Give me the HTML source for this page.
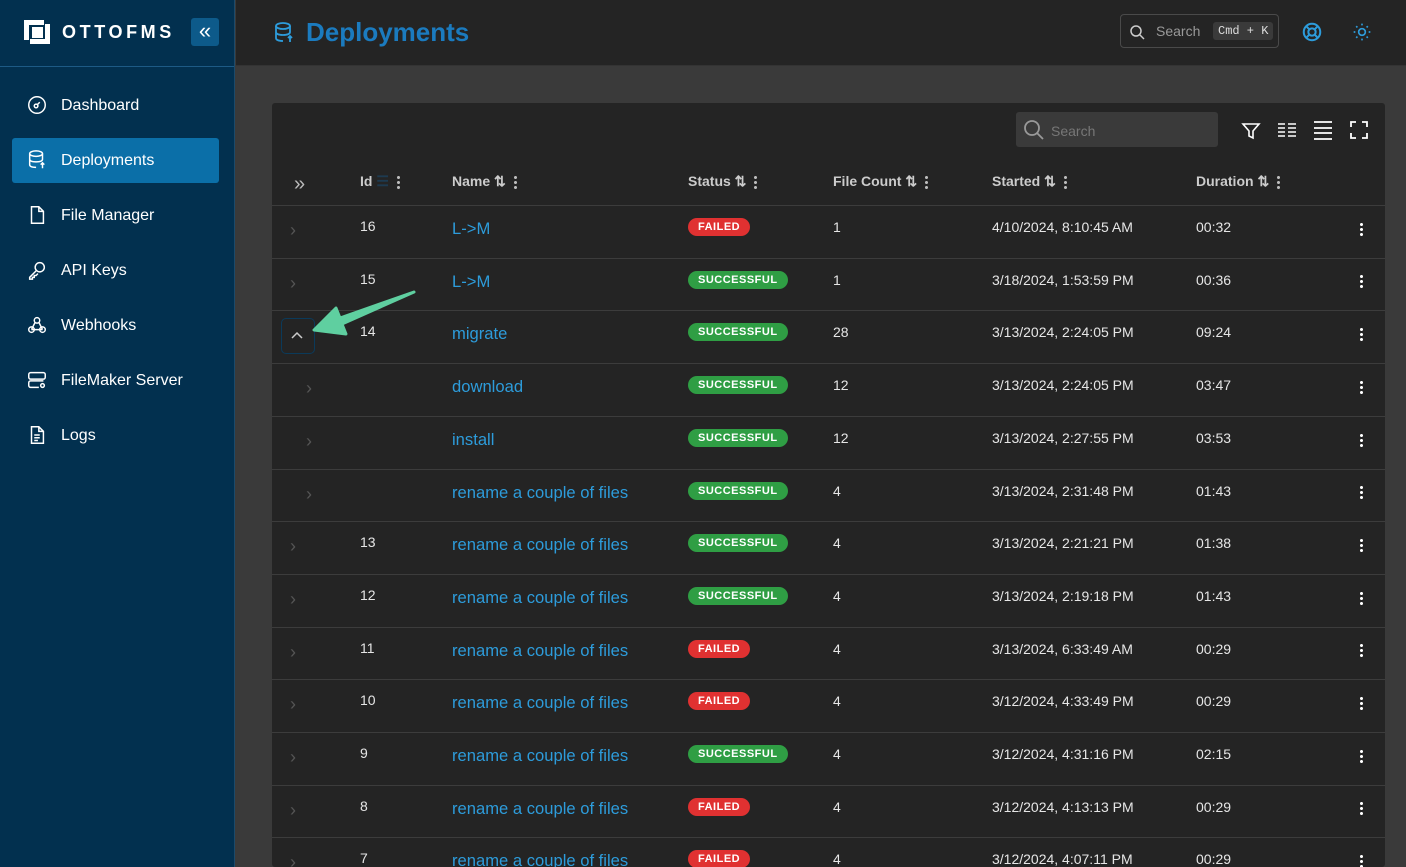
<!DOCTYPE html>
<html><head><meta charset="utf-8"><style>
*{box-sizing:border-box;margin:0;padding:0}
html{width:1406px;height:867px;overflow:hidden}
body{width:1406px;height:867px;overflow:hidden;background:#3a3a3a;font-family:"Liberation Sans",sans-serif;position:relative;color:#e6e6e6}
.sb{position:absolute;left:0;top:0;width:235px;height:867px;background:#02304f;border-right:1px solid #1b4a6b}
.sbh{height:67px;border-bottom:1px solid #1d5a85;position:relative}
.logo{position:absolute;left:22px;top:16px}
.brand{position:absolute;left:62px;top:22px;font-weight:bold;font-size:18px;letter-spacing:3.6px;color:#fff}
.coll{position:absolute;left:191px;top:18px;width:28px;height:28px;background:#0d5a8a;border-radius:3px;color:#fff;font-size:22px;line-height:26px;text-align:center}
.nav{position:absolute;left:12px;width:207px;height:45px;border-radius:3px;font-size:16px;color:#fff}
.nav span{position:absolute;left:49px;top:14px}
.nav svg{position:absolute;left:14px;top:11px}
.act{background:#0b6fa8}
.top{position:absolute;left:236px;top:0;right:0;height:66px;background:#242424;border-bottom:1px solid #333}
.title{position:absolute;left:70px;top:17px;font-size:26px;font-weight:bold;color:#1b7bbf}
.srch{position:absolute;left:884px;top:14px;width:159px;height:34px;border:1px solid #4a4a4a;border-radius:4px;font-size:14px;color:#999}
.kbd{position:absolute;left:92px;top:7px;background:#3a3a3a;border-radius:3px;font-family:"Liberation Mono",monospace;font-size:12px;color:#ddd;padding:2px 5px}
.card{position:absolute;left:272px;top:103px;width:1113px;height:764px;overflow:hidden;background:#242424;border-radius:3px}
.tsearch{position:absolute;left:744px;top:9px;width:202px;height:35px;background:#3a3a3a;border-radius:3px;color:#777;font-size:14px}
.hdr{position:absolute;top:70px;font-weight:bold;font-size:14px;color:#ccc}
.row{position:absolute;left:0;width:1113px;border-top:1px solid #3c3c3c;height:53px;font-size:14px;color:#e6e6e6}
.row div{position:absolute;top:13px}
.nm{color:#2d9cdb;font-size:16.6px}
.badge{font-size:11px;font-weight:bold;letter-spacing:.5px;color:#fff;border-radius:9px;padding:3px 10px;top:12px!important}
.f{background:#e03131}.s{background:#2f9e44}
.kb{left:1088px;top:14px!important}
.dots{display:inline-block;width:3px;height:15px;background:radial-gradient(circle,#bbb 1.4px,transparent 1.6px) 0 0/3px 5px;vertical-align:middle}
</style></head><body>
<div class="sb">
 <div class="sbh">
  <svg class="logo" width="30" height="32" viewBox="0 0 30 32"><path d="M2 4 H22 V9 H7 V24 H2 Z" fill="#fff"/><rect x="10" y="11" width="11" height="11" fill="#fff"/><path d="M28 8 V28 H8 V23 H23 V8 Z" fill="#fff"/></svg>
  <div class="brand">OTTOFMS</div>
  <div class="coll">«</div>
 </div>
 <div class="nav" style="top:83px"><svg width="22" height="22" viewBox="0 0 24 24" fill="none" stroke="#fff" stroke-width="1.6"><circle cx="12" cy="12" r="9"/><circle cx="11" cy="13" r="2"/><path d="M12.5 11.5 15 9"/></svg><span>Dashboard</span></div>
 <div class="nav act" style="top:138px"><svg width="22" height="22" viewBox="0 0 24 24" fill="none" stroke="#fff" stroke-width="1.6"><ellipse cx="11" cy="5" rx="7" ry="3"/><path d="M4 5v12c0 2 3 3 7 3M18 5v6M4 11c0 2 3 3 7 3s7-1 7-3M18 15v6M16 17l2-2 2 2"/></svg><span>Deployments</span></div>
 <div class="nav" style="top:193px"><svg width="22" height="22" viewBox="0 0 24 24" fill="none" stroke="#fff" stroke-width="1.6"><path d="M6 3h8l5 5v13H6z M14 3v5h5"/></svg><span>File Manager</span></div>
 <div class="nav" style="top:248px"><svg width="22" height="22" viewBox="0 0 24 24" fill="none" stroke="#fff" stroke-width="1.6"><circle cx="15" cy="9" r="5"/><path d="M11 13 4 20v2h3v-2h2v-2h2l2-2"/></svg><span>API Keys</span></div>
 <div class="nav" style="top:303px"><svg width="22" height="22" viewBox="0 0 24 24" fill="none" stroke="#fff" stroke-width="1.6"><circle cx="12" cy="7" r="3"/><circle cx="6" cy="17" r="3"/><circle cx="18" cy="17" r="3"/><path d="M10 9l-4 8M14 9l4 8M6 17h12"/></svg><span>Webhooks</span></div>
 <div class="nav" style="top:358px"><svg width="22" height="22" viewBox="0 0 24 24" fill="none" stroke="#fff" stroke-width="1.6"><rect x="3" y="4" width="18" height="7" rx="2"/><path d="M14 20H5a2 2 0 0 1-2-2v-3a2 2 0 0 1 2-2h14"/><circle cx="18" cy="18" r="2"/><path d="M7 7.5h.01M7 16.5h.01"/></svg><span>FileMaker Server</span></div>
 <div class="nav" style="top:413px"><svg width="22" height="22" viewBox="0 0 24 24" fill="none" stroke="#fff" stroke-width="1.6"><path d="M6 3h8l5 5v13H6z M14 3v5h5 M9 12h6M9 15h6M9 18h4"/></svg><span>Logs</span></div>
</div>
<div class="top">
 <svg style="position:absolute;left:36px;top:21px" width="24" height="24" viewBox="0 0 24 24" fill="none" stroke="#2d9cdb" stroke-width="1.8"><ellipse cx="11" cy="5" rx="7" ry="3"/><path d="M4 5v12c0 2 3 3 7 3M18 5v6M4 11c0 2 3 3 7 3s7-1 7-3M18 15v6M16 17l2-2 2 2"/></svg>
 <div class="title">Deployments</div>
 <div class="srch"><svg style="position:absolute;left:8px;top:9px" width="16" height="16" viewBox="0 0 16 16" fill="none" stroke="#ccc" stroke-width="1.5"><circle cx="7" cy="7" r="5"/><path d="M11 11l4 4"/></svg><span style="position:absolute;left:35px;top:8px">Search</span><span class="kbd">Cmd + K</span></div>
 <svg style="position:absolute;left:1065px;top:21px" width="22" height="22" viewBox="0 0 24 24" fill="none" stroke="#2d9cdb" stroke-width="2.2"><circle cx="12" cy="12" r="9"/><circle cx="12" cy="12" r="4"/><path d="M5.6 5.6l3.6 3.6M18.4 5.6l-3.6 3.6M5.6 18.4l3.6-3.6M18.4 18.4l-3.6-3.6"/></svg>
 <svg style="position:absolute;left:1116px;top:22px" width="20" height="20" viewBox="0 0 24 24" fill="none" stroke="#2d9cdb" stroke-width="2"><circle cx="12" cy="12" r="4"/><path d="M12 2v2M12 20v2M2 12h2M20 12h2M5 5l1.5 1.5M17.5 17.5 19 19M5 19l1.5-1.5M17.5 6.5 19 5"/></svg>
</div>
<div class="card">
 <div class="tsearch"><svg style="position:absolute;left:7px;top:7px" width="22" height="22" viewBox="0 0 22 22" fill="none" stroke="#999" stroke-width="1.8"><circle cx="9" cy="9" r="7"/><path d="M14 14l6 6"/></svg><span style="position:absolute;left:35px;top:11px">Search</span></div>
 <svg style="position:absolute;left:969px;top:18px" width="20" height="20" viewBox="0 0 20 20" fill="none" stroke="#fff" stroke-width="1.6"><path d="M2 3h16l-6 7v7l-4-2v-5z"/></svg>
 <svg style="position:absolute;left:1006px;top:19px" width="18" height="16" viewBox="0 0 18 16" stroke="#fff" stroke-width="1.6"><path d="M0 2h7M10 2h8M0 6h7M10 6h8M0 10h7M10 10h8M0 14h7M10 14h8"/></svg>
 <svg style="position:absolute;left:1041px;top:17px" width="20" height="20" viewBox="0 0 20 20" stroke="#fff" stroke-width="1.8"><path d="M1 2h18M1 8h18M1 13h18M1 19h18"/></svg>
 <svg style="position:absolute;left:1078px;top:18px" width="18" height="18" viewBox="0 0 18 18" fill="none" stroke="#fff" stroke-width="1.8"><path d="M1 6V1h5M12 1h5v5M17 12v5h-5M6 17H1v-5"/></svg>
 <div class="hdr" style="left:22px;top:70px;font-size:20px;font-weight:normal;color:#bbb">»</div>
 <div class="hdr" style="left:88px">Id <span style="color:#1d3a50">☰</span> &nbsp;<span class="dots"></span></div>
 <div class="hdr" style="left:180px">Name ⇅ &nbsp;<span class="dots"></span></div>
 <div class="hdr" style="left:416px">Status ⇅ &nbsp;<span class="dots"></span></div>
 <div class="hdr" style="left:561px">File Count ⇅ &nbsp;<span class="dots"></span></div>
 <div class="hdr" style="left:720px">Started ⇅ &nbsp;<span class="dots"></span></div>
 <div class="hdr" style="left:924px">Duration ⇅ &nbsp;<span class="dots"></span></div>
 <div id="rows"></div>
</div>
<div style="position:absolute;left:281px;top:318px;width:34px;height:36px;border:1px solid #0b3a5a;border-radius:5px"></div>
<svg style="position:absolute;left:289px;top:328px" width="16" height="14" viewBox="0 0 16 14" fill="none" stroke="#ccc" stroke-width="1.5"><path d="M3 10l5-5 5 5"/></svg>
<svg style="position:absolute;left:310px;top:290px" width="110" height="50" viewBox="0 0 110 50"><path d="M104 2 L30 28 L26 18 L4 40 L36 44 L32 34 Z" fill="#5fcfa0" stroke="#5fcfa0" stroke-width="3" stroke-linejoin="round"/></svg>
<script>
const d=[["16","L->M","f","1","4/10/2024, 8:10:45 AM","00:32",0],["15","L->M","s","1","3/18/2024, 1:53:59 PM","00:36",0],["14","migrate","s","28","3/13/2024, 2:24:05 PM","09:24",2],["","download","s","12","3/13/2024, 2:24:05 PM","03:47",1],["","install","s","12","3/13/2024, 2:27:55 PM","03:53",1],["","rename a couple of files","s","4","3/13/2024, 2:31:48 PM","01:43",1],["13","rename a couple of files","s","4","3/13/2024, 2:21:21 PM","01:38",0],["12","rename a couple of files","s","4","3/13/2024, 2:19:18 PM","01:43",0],["11","rename a couple of files","f","4","3/13/2024, 6:33:49 AM","00:29",0],["10","rename a couple of files","f","4","3/12/2024, 4:33:49 PM","00:29",0],["9","rename a couple of files","s","4","3/12/2024, 4:31:16 PM","02:15",0],["8","rename a couple of files","f","4","3/12/2024, 4:13:13 PM","00:29",0],["7","rename a couple of files","f","4","3/12/2024, 4:07:11 PM","00:29",0]];
let h="";d.forEach((r,i)=>{const t=102+i*52.7;
const ch=r[6]==2?"":`<div style="left:${r[6]?34:18}px;top:14px;color:#555;font-size:18px">›</div>`;
h+=`<div class="row" style="top:${t}px">${ch}<div style="left:88px;top:12px">${r[0]}</div><div class="nm" style="left:180px;top:13px">${r[1]}</div><div class="badge ${r[2]}" style="left:416px">${r[2]=="f"?"FAILED":"SUCCESSFUL"}</div><div style="left:561px;top:13px">${r[3]}</div><div style="left:720px;top:13px">${r[4]}</div><div style="left:924px;top:13px">${r[5]}</div><div class="kb"><span class="dots" style="background-image:radial-gradient(circle,#fff 1.4px,transparent 1.6px)"></span></div></div>`});
document.getElementById("rows").innerHTML=h;
</script>
</body></html>
